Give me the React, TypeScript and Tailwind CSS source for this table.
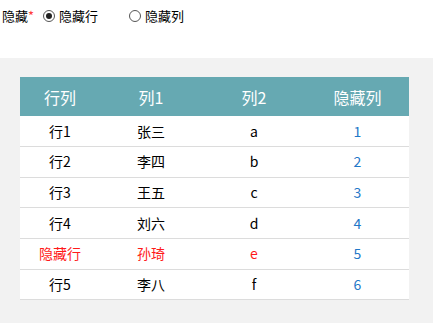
const rows = [
  { r: "行1", c1: "张三", c2: "a", h: "1", hidden: false },
  { r: "行2", c1: "李四", c2: "b", h: "2", hidden: false },
  { r: "行3", c1: "王五", c2: "c", h: "3", hidden: false },
  { r: "行4", c1: "刘六", c2: "d", h: "4", hidden: false },
  { r: "隐藏行", c1: "孙琦", c2: "e", h: "5", hidden: true },
  { r: "行5", c1: "李八", c2: "f", h: "6", hidden: false },
];

const Radio = ({ checked, label }: { checked?: boolean; label: string }) => (
  <label className="flex items-center gap-[4px]">
    <span className="flex h-[12px] w-[12px] items-center justify-center rounded-full border border-[#555] bg-white">
      {checked && <span className="h-[6px] w-[6px] rounded-full bg-[#222]" />}
    </span>
    <span>{label}</span>
  </label>
);

export default function App() {
  return (
    <div
      className="h-[335px] w-[448px] bg-white text-black"
      style={{ fontFamily: '"Noto Sans CJK SC", sans-serif' }}
    >
      {/* filter bar */}
      <div className="flex h-[31px] items-center pl-[2px] text-[13px]">
        <span>
          隐藏<span className="text-[#ff3b3b]">*</span>
        </span>
        <div className="ml-[9px] w-[86px]">
          <Radio checked label="隐藏行" />
        </div>
        <Radio label="隐藏列" />
      </div>

      {/* table panel */}
      <div className="mt-[27px] h-[265px] w-[433px] bg-[#f2f2f2] px-[20px] pt-[19px]">
        <table className="w-[389px] table-fixed border-collapse bg-white text-center">
          <colgroup>
            <col className="w-[80px]" />
            <col className="w-[102px]" />
            <col className="w-[104px]" />
            <col className="w-[103px]" />
          </colgroup>
          <thead>
            <tr className="h-[39px] bg-[#66a9b2] text-[16px] text-white">
              <th className="font-normal">行列</th>
              <th className="font-normal">列1</th>
              <th className="font-normal">列2</th>
              <th className="font-normal">隐藏列</th>
            </tr>
          </thead>
          <tbody className="text-[14px]">
            {rows.map((row) => (
              <tr key={row.h} className="h-[30.67px] border-b border-[#dcdcdc]">
                <td className={row.hidden ? "text-[#ff1a1a]" : ""}>{row.r}</td>
                <td className={row.hidden ? "text-[#ff1a1a]" : ""}>{row.c1}</td>
                <td className={row.hidden ? "text-[#ff1a1a]" : ""}>{row.c2}</td>
                <td className="text-[#1f78c8]">{row.h}</td>
              </tr>
            ))}
          </tbody>
        </table>
      </div>
    </div>
  );
}
